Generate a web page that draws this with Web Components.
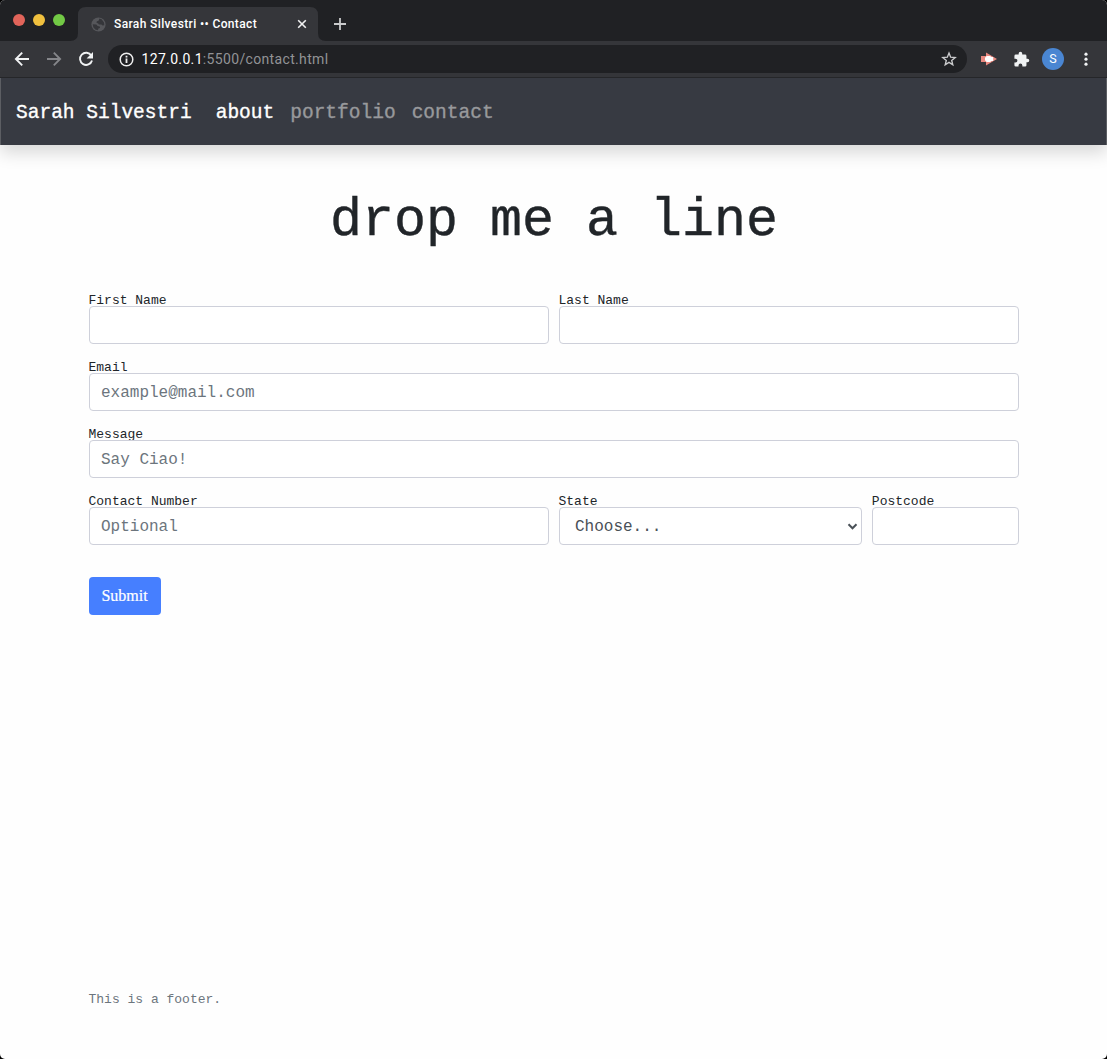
<!DOCTYPE html>
<html lang="en">
<head>
<meta charset="utf-8">
<title>Sarah Silvestri •• Contact</title>
<style>
html{background:#000}
body{margin:0;height:1059px;overflow:hidden;font-family:"Liberation Mono",monospace;color:#212529}
</style>
</head>
<body>
<browser-window>
  <tab-strip slot="chrome"><browser-tab>Sarah Silvestri •• Contact</browser-tab></tab-strip>
  <tool-bar slot="chrome"><address-bar><span slot="host">127.0.0.1</span><span slot="path">:5500/contact.html</span></address-bar></tool-bar>
  <site-nav>
    <span slot="brand">Sarah Silvestri</span>
    <nav-link active>about</nav-link><nav-link>portfolio</nav-link><nav-link>contact</nav-link>
  </site-nav>
  <contact-page>
    <span slot="title">drop me a line</span>
    <form-field span="6" label="First Name"></form-field>
    <form-field span="6" label="Last Name"></form-field>
    <form-field span="12" label="Email">example@mail.com</form-field>
    <form-field span="12" label="Message">Say Ciao!</form-field>
    <form-field span="6" label="Contact Number">Optional</form-field>
    <form-field span="4" label="State" select>Choose...</form-field>
    <form-field span="2" label="Postcode"></form-field>
    <submit-button slot="action">Submit</submit-button>
    <span slot="footer">This is a footer.</span>
  </contact-page>
</browser-window>
<script>
const define = (name, markup, setup) => customElements.define(name, class extends HTMLElement {
  constructor() {
    super();
    this.attachShadow({mode: 'open'}).innerHTML = markup;
  }
  connectedCallback() { if (setup) setup(this, this.shadowRoot); }
});

define('browser-window', `<style>
:host{display:flex;flex-direction:column;height:1059px;border-radius:5px;overflow:hidden;background:#fefefe}
</style><slot name="chrome"></slot><slot></slot>`);

define('tab-strip', `<style>
:host{display:flex;height:41px;background:#202124;flex:none}
.lights{display:flex;gap:8px;padding:14px 0 0 13px;width:65px;box-sizing:border-box}
i{width:12px;height:12px;border-radius:50%;background:#e1645a}
i:nth-child(2){background:#f0c03e}i:nth-child(3){background:#72c945}
.row{display:flex}
.holder{padding-top:7px;margin-left:5px}
.plus{margin:16px 0 0 6px}
</style><div class="lights"><i></i><i></i><i></i></div>
<div class="row"><div class="holder"><slot></slot></div>
<svg class="plus" width="16" height="16" viewBox="0 0 16 16"><path d="M8 2v12M2 8h12" stroke="#c9cacc" stroke-width="1.800"/></svg></div>`);

define('browser-tab', `<style>
:host{display:flex;align-items:center;width:256px;height:34px;
font:500 12px/16px Roboto,sans-serif;color:#fff;position:relative;isolation:isolate}
.bg{position:absolute;inset:0;z-index:-1}
.globe{margin-left:20.500px}.title{margin-left:8.500px;width:182px;white-space:nowrap;letter-spacing:.370px}
</style><svg class="bg" width="256" height="34"><path d="M0 34Q8 34 8 26V8Q8 0 16 0H240Q248 0 248 8V26Q248 34 256 34Z" fill="#35363a"/></svg>
<svg class="globe" width="15" height="15" viewBox="0 0 15 15"><circle cx="7.500" cy="7.500" r="7.100" fill="#56575b"/><path d="M8.400 1.600 10.600 2.200 13 5.500 13.300 8.300 11.500 8.600 10.400 7.600 7.900 7.500 7 6.300 5.600 5.900 5.700 4.400 7.800 3.600ZM1.700 7.300 5.300 7.600 6.600 8.900 8.800 9.500 9 11 7.400 11.400 6.900 13.200 4.300 12.500 2.300 10.300Z" fill="#35363a"/></svg>
<span class="title"><slot></slot></span>
<svg width="12" height="12" viewBox="0 0 12 12"><path d="M2.200 2.200l7.600 7.600M9.800 2.200L2.200 9.800" stroke="#f1f1f2" stroke-width="1.600"/></svg>`);

define('tool-bar', `<style>
:host{display:flex;align-items:center;box-sizing:border-box;height:37px;background:#35363a;border-bottom:1px solid #26272a;flex:none;padding-left:14px}
svg{flex:none}
.nav{display:flex;gap:16px;margin-right:14px}
slot{display:block;width:859px}
.ext{margin-left:14px}.puzzle{margin-left:15.500px}
.avatar{margin-left:12.500px;width:22px;height:22px;border-radius:50%;background:#4a86d2;color:#fff;font:12.500px/22px Roboto,sans-serif;text-align:center}
.dots{margin-left:18.500px}
</style>
<div class="nav">
<svg width="16" height="16" viewBox="0 0 16 16"><path d="M15 8H2.200M8.200 1.700L1.900 8l6.300 6.300" fill="none" stroke="#f1f3f4" stroke-width="1.900"/></svg>
<svg width="16" height="16" viewBox="0 0 16 16"><path d="M1 8h12.800M7.800 1.700L14.100 8l-6.300 6.300" fill="none" stroke="#85868a" stroke-width="1.900"/></svg>
<svg width="16" height="16" viewBox="0 0 16 16"><path d="M13.300 4.600A6.100 6.100 0 1 0 14 9.500" fill="none" stroke="#f1f3f4" stroke-width="1.900"/><path d="M15 1v6.400H8.600Z" fill="#f1f3f4"/></svg>
</div><slot></slot>
<svg class="ext" width="16" height="14" viewBox="0 0 16 14"><path d="M0 4h5V.5L16 7 5 13.500V10H0Z" fill="#e98980"/><path d="M5.200 4h4.500v1h2.500v4H9.700v1H5.200V8.800H4V5.200h1.200Z" fill="#fff"/></svg>
<svg class="puzzle" width="17" height="17" viewBox="0 0 24 24"><path d="M20.500 11H19V7a2 2 0 0 0-2-2h-4V3.500a2.500 2.500 0 0 0-5 0V5H4a2 2 0 0 0-2 2v3.800h1.500a2.700 2.700 0 0 1 0 5.400H2V20a2 2 0 0 0 2 2h3.800v-1.500a2.700 2.700 0 0 1 5.400 0V22H17a2 2 0 0 0 2-2v-4h1.500a2.500 2.500 0 0 0 0-5z" fill="#f1f3f4"/></svg>
<div class="avatar">S</div>
<svg class="dots" width="6" height="16" viewBox="0 0 6 16" fill="#f1f3f4"><circle cx="3" cy="3.200" r="1.600"/><circle cx="3" cy="8.200" r="1.600"/><circle cx="3" cy="13.200" r="1.600"/></svg>`);

define('address-bar', `<style>
:host{display:flex;align-items:center;height:28px;border-radius:14px;background:#202124;font:14px/20px Roboto,sans-serif;box-sizing:border-box;padding:0 10px 0 10.500px}
.text{margin-left:8px;flex:1;letter-spacing:.340px;white-space:nowrap}
.host{color:#fff}.path{color:#929396}
</style>
<svg width="15" height="15" viewBox="0 0 15 15"><circle cx="7.500" cy="7.500" r="6.300" fill="none" stroke="#eee" stroke-width="1.500"/><path d="M7.500 6.500v4.600M7.500 3.700v1.700" stroke="#eee" stroke-width="1.800"/></svg>
<div class="text"><span class="host"><slot name="host"></slot></span><span class="path"><slot name="path"></slot></span></div>
<svg width="16" height="16" viewBox="0 0 16 16"><path d="M8 2l1.650 4.150 4.550.35-3.500 2.900 1.100 4.400L8 11.400l-3.800 2.400 1.100-4.400-3.500-2.900 4.550-.35Z" fill="none" stroke="#cbccce" stroke-width="1.350"/></svg>`);

define('site-nav', `<style>
:host{display:flex;align-items:center;height:67px;flex:none;box-sizing:border-box;padding:3px 15px 0;background:#373a42;
border:solid #5c5e63;border-width:0 1px;box-shadow:0 8px 16px rgba(0,0,0,.15);font-size:19.520px;line-height:29px;position:relative;-webkit-text-stroke:.35px}
.brand{color:#fff;margin-right:16px}
</style><span class="brand"><slot name="brand"></slot></span><slot></slot>`);

define('nav-link', `<style>
:host{display:block;padding:0 8px;color:#98999c}
:host([active]){color:#fff}
</style><slot></slot>`);

define('contact-page', `<style>
:host{display:flex;flex-direction:column;flex:1;padding:0 88px 0 89px}
h1{margin:40px 0 0;font-weight:400;font-size:53.300px;line-height:72px;text-align:center;-webkit-text-stroke:.4px}
form{display:grid;grid-template-columns:repeat(12,1fr);column-gap:10px;row-gap:16px;margin-top:36px}
.action{margin-top:32px;display:flex}
footer{margin-top:auto;padding-bottom:49px;margin-left:-.5px;font-size:13px;line-height:20px;color:#6c757d}
</style><h1><slot name="title"></slot></h1><form><slot></slot></form>
<div class="action"><slot name="action"></slot></div><footer><slot name="footer"></slot></footer>`);

define('form-field', `<style>
:host{display:flex;flex-direction:column;min-width:0}
label{font-size:13px;line-height:15px;height:13px;margin-left:-.5px}
.control{display:flex;align-items:center;justify-content:space-between;box-sizing:border-box;height:38px;border:1px solid #ced0da;border-radius:4px;background:#fff;padding:2px 11px 0;font-size:16px;line-height:24px;color:#6c757d}
:host([select]) .control{padding:2px 3px 0 15px;color:#495057}
svg{display:none;margin-bottom:1px}:host([select]) svg{display:block}
</style><label></label><div class="control"><slot></slot><svg width="11" height="8" viewBox="0 0 11 8"><path d="M1.500 1.300l4 4 4-4" fill="none" stroke="#495057" stroke-width="2"/></svg></div>`,
(el, root) => {
  root.querySelector('label').textContent = el.getAttribute('label');
  el.style.gridColumn = 'span ' + el.getAttribute('span');
});

define('submit-button', `<style>
:host{display:block}
button{display:block;box-sizing:border-box;height:38px;width:72px;border:0;border-radius:4px;padding:0 1px 0 0;background:#467fff;color:#fff;font:16px/24px "Liberation Serif",serif;-webkit-text-stroke:.2px}
</style><button type="button"><slot></slot></button>`);
</script>
</body>
</html>
